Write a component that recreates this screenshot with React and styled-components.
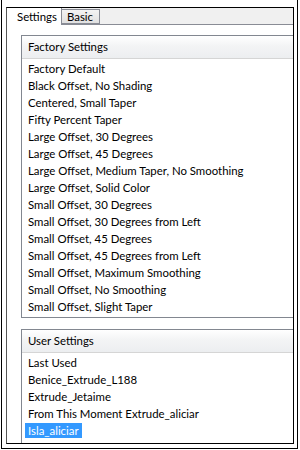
import styled, { createGlobalStyle } from "styled-components";

const factory = [
  "Factory Default",
  "Black Offset, No Shading",
  "Centered, Small Taper",
  "Fifty Percent Taper",
  "Large Offset, 30 Degrees",
  "Large Offset, 45 Degrees",
  "Large Offset, Medium Taper, No Smoothing",
  "Large Offset, Solid Color",
  "Small Offset, 30 Degrees",
  "Small Offset, 30 Degrees from Left",
  "Small Offset, 45 Degrees",
  "Small Offset, 45 Degrees from Left",
  "Small Offset, Maximum Smoothing",
  "Small Offset, No Smoothing",
  "Small Offset, Slight Taper",
];

const user = [
  "Last Used",
  "Benice_Extrude_L188",
  "Extrude_Jetaime",
  "From This Moment Extrude_aliciar",
  "Isla_aliciar",
];

const GlobalStyle = createGlobalStyle`
  html, body {
    margin: 0;
    padding: 0;
    background: #fff;
  }
  body {
    font-family: Lato, "Liberation Sans", Arial, sans-serif;
    font-size: 11.4px;
    color: #000;
  }
`;

const Outer = styled.div`
  box-sizing: border-box;
  margin-left: 1px;
  width: 297px;
  height: 449px;
  border: 1px solid #000;
  border-top: none;
  padding: 7px 3px 4px 4px;
`;

const Frame = styled.div`
  box-sizing: border-box;
  height: 437px;
  border: 1px solid #000;
  border-left-color: #555;
  background: #f0f0f0;
  display: flex;
  flex-direction: column;
  overflow: hidden;
`;

const TabStrip = styled.div`
  display: flex;
  align-items: flex-end;
  height: 16px;
  flex-shrink: 0;
`;

const Tab = styled.div`
  box-sizing: border-box;
  height: ${(p) => (p.$active ? "17px" : "15px")};
  margin-bottom: ${(p) => (p.$active ? "-1px" : "0")};
  width: ${(p) => p.$width}px;
  padding-left: ${(p) => (p.$active ? "10px" : "5px")};
  border: 1px solid #898c95;
  border-bottom: ${(p) => (p.$active ? "none" : "1px solid #898c95")};
  border-left: ${(p) => (p.$active ? "none" : "1px solid #898c95")};
  border-top: ${(p) => (p.$active ? "none" : "1px solid #898c95")};
  background: ${(p) =>
    p.$active ? "#fff" : "linear-gradient(#f3f3f3, #e1e1e1)"};
  line-height: ${(p) => (p.$active ? "17px" : "13px")};
  position: relative;
  z-index: ${(p) => (p.$active ? 1 : 0)};
  margin-left: ${(p) => (p.$active ? "0" : "-1px")};
`;

const Panel = styled.div`
  flex: 1;
  background: #fff;
  border-top: 1px solid #898c95;
  padding: 10px 0 0 14px;
  display: flex;
  flex-direction: column;
  gap: 11px;
`;

const ListBox = styled.div`
  box-sizing: border-box;
  width: 290px;
  height: ${(p) => p.$height}px;
  flex-shrink: 0;
  border: 1px solid #828790;
  display: flex;
`;

const ListBody = styled.div`
  flex: 1;
  display: flex;
  flex-direction: column;
`;

const Header = styled.div`
  height: 22px;
  flex-shrink: 0;
  border-bottom: 1px solid #d5d5d5;
  background: linear-gradient(#ffffff, #f3f4f5 45%, #eceef0);
  padding-left: 6px;
  line-height: 22px;
`;

const Rows = styled.div`
  padding-top: 1px;
`;

const Row = styled.div`
  height: 17px;
  line-height: 17px;
  padding-left: 3px;
  white-space: nowrap;
  overflow: hidden;
`;

const Label = styled.span`
  display: inline-block;
  padding: 0 3px;
  line-height: 15px;
  background: ${(p) => (p.$selected ? "#3399ff" : "transparent")};
  color: ${(p) => (p.$selected ? "#fff" : "#000")};
`;

const ScrollBar = styled.div`
  width: 17px;
  flex-shrink: 0;
  background: linear-gradient(90deg, #e3e3e3, #eeeeee 30%, #f0f0f0);
  display: flex;
  flex-direction: column;
  align-items: flex-start;
`;

const Arrow = styled.div`
  height: 17px;
  width: 12px;
  display: flex;
  align-items: center;
  justify-content: center;
  flex-shrink: 0;
`;

const Thumb = styled.div`
  box-sizing: border-box;
  margin-top: 1px;
  margin-left: 1px;
  width: 11px;
  height: 182px;
  border: 1px solid #8a8a8a;
  border-right: none;
  border-radius: 2px 0 0 2px;
  background: linear-gradient(90deg, #f2f2f2, #e6e6e6 50%, #d6d6d6);
  display: flex;
  align-items: center;
  justify-content: center;
`;

const Grip = styled.div`
  width: 6px;
  height: 7px;
  margin-left: 2px;
  background: repeating-linear-gradient(#444 0 1px, transparent 1px 2px);
`;

const Spacer = styled.div`
  flex: 1;
`;

const EmptyBar = styled.div`
  width: 12px;
  flex-shrink: 0;
  background: #f4f4f4;
  border-left: 1px solid #e6e6e6;
`;

const Triangle = ({ up }) => (
  <svg width="7" height="4" viewBox="0 0 7 4">
    <path d={up ? "M0 4 L3.5 0 L7 4 Z" : "M0 0 L3.5 4 L7 0 Z"} fill="#4d4d4d" />
  </svg>
);

export default function App() {
  return (
    <>
      <GlobalStyle />
      <Outer>
        <Frame>
          <TabStrip>
            <Tab $active $width={55}>Settings</Tab>
            <Tab $width={39}>Basic</Tab>
          </TabStrip>
          <Panel>
            <ListBox $height={283}>
              <ListBody>
                <Header>Factory Settings</Header>
                <Rows>
                  {factory.map((name) => (
                    <Row key={name}>
                      <Label>{name}</Label>
                    </Row>
                  ))}
                </Rows>
              </ListBody>
              <ScrollBar>
                <Arrow>
                  <Triangle up />
                </Arrow>
                <Thumb>
                  <Grip />
                </Thumb>
                <Spacer />
                <Arrow>
                  <Triangle />
                </Arrow>
              </ScrollBar>
            </ListBox>
            <ListBox $height={140}>
              <ListBody>
                <Header>User Settings</Header>
                <Rows>
                  {user.map((name, i) => (
                    <Row key={name}>
                      <Label $selected={i === user.length - 1}>{name}</Label>
                    </Row>
                  ))}
                </Rows>
              </ListBody>
              <EmptyBar />
            </ListBox>
          </Panel>
        </Frame>
      </Outer>
    </>
  );
}
